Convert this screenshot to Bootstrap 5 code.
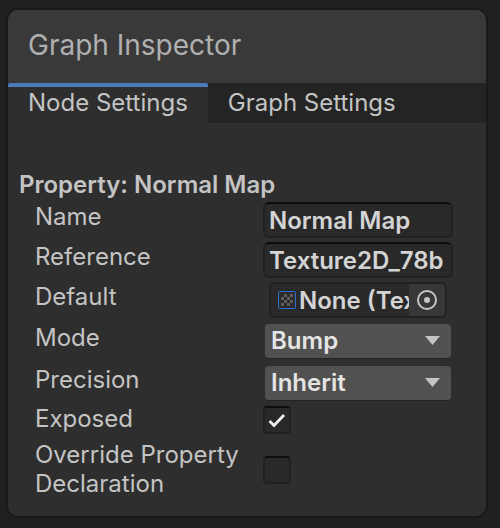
<!DOCTYPE html>
<html lang="en">
<head>
<meta charset="utf-8">
<meta name="viewport" content="width=device-width, initial-scale=1">
<title>Graph Inspector</title>
<link href="https://cdn.jsdelivr.net/npm/bootstrap@5.3.0/dist/css/bootstrap.min.css" rel="stylesheet">
<style>
  body { background: #202020; color: #c4c4c4; font-family: Inter, "Liberation Sans", sans-serif; font-size: 24px; line-height: 29px; }
  .inspector { margin: 8px 12px 10px 6px; background: #2e2e2e; border: 2px solid #191919; border-radius: 12px; overflow: hidden; }
  .inspector-title { background: #393939; color: #b0b0b0; padding: 18px 20px 21px; }
  .inspector-title h1 { font-size: 28px; line-height: 34px; font-weight: 400; }
  .inspector-tabs { background: #242424; }
  .inspector-tabs .nav-link { height: 40px; padding: 1px 20px 6px; border-top: 4px solid transparent; border-radius: 0; color: #c4c4c4; }
  .inspector-tabs .nav-link.active { background: #2e2e2e; border-top-color: #4a7bbd; border-radius: 2px 2px 0 0; }
  .inspector-body { padding: 47px 33px 17px 11px; }
  .inspector-body h2 { font-size: 24px; line-height: 29px; font-weight: 600; padding-bottom: 3px; }
  .prop { padding-left: 16px; min-height: 40px; }
  .prop-label { flex: 0 0 228px; }
  .prop-menu { min-height: 42px; padding-top: 2px; }
  .prop-menu .prop-label { margin-top: -1px; }
  .prop-tick { min-height: 34px; }
  .prop-tick .prop-label { margin-top: -2px; }
  .field { width: 100%; min-width: 0; height: 36px; padding: 0 4px; background: #292929; color: #d4d4d4; border: 2px solid #212121; border-top-color: #0d0d0d; border-radius: 6px; font-weight: 600; outline: 0; }
  .object-field { height: 36px; margin: 0 6px; background: #292929; color: #d4d4d4; border: 2px solid #212121; border-radius: 6px; font-weight: 600; overflow: hidden; }
  .object-field input { color: inherit; font-weight: 600; background: none; border: 0; padding: 0; margin-left: 3px; min-width: 0; outline: 0; }
  .object-field button { width: 36px; background: #373737; border: 0; }
  .object-field .texture { margin-left: 7px; }
  .menu { appearance: none; height: 35px; margin: 0 2px; padding: 0 40px 1px 6px; color: #e4e4e4; font-weight: 600; border: 0; border-bottom: 1px solid #242424; border-radius: 4px; outline: 0;
    background: #515151 url("data:image/svg+xml,%3Csvg xmlns='http://www.w3.org/2000/svg' width='15' height='9'%3E%3Cpath d='M0 0h15L7.5 9z' fill='%23c4c4c4'/%3E%3C/svg%3E") no-repeat right 11px top 12px; }
  .tick { appearance: none; width: 28px; height: 28px; margin: 0; background: #292929 center no-repeat; border: 2px solid #212121; border-top-color: #0d0d0d; border-radius: 4px; }
  .tick:checked { background-image: url("data:image/svg+xml,%3Csvg xmlns='http://www.w3.org/2000/svg' width='24' height='24'%3E%3Cpath d='M4.5 13l4.500 4.500L19 7' fill='none' stroke='%23eee' stroke-width='2.800'/%3E%3C/svg%3E"); }
  .prop-last { padding-bottom: 1px; }
  .prop-last .tick { margin-top: 2px; }
</style>
</head>
<body>
<main class="inspector">
  <header class="inspector-title"><h1 class="m-0">Graph Inspector</h1></header>
  <nav class="inspector-tabs nav flex-nowrap">
    <a class="nav-link active" aria-current="page" href="#node">Node Settings</a>
    <a class="nav-link" href="#graph">Graph Settings</a>
  </nav>
  <form class="inspector-body" id="node">
    <h2 class="m-0">Property: Normal Map</h2>
    <div class="prop d-flex align-items-start">
      <label class="prop-label" for="name">Name</label>
      <input class="field" id="name" type="text" value="Normal Map">
    </div>
    <div class="prop d-flex align-items-start">
      <label class="prop-label" for="reference">Reference</label>
      <input class="field" id="reference" type="text" value="Texture2D_78b">
    </div>
    <div class="prop d-flex align-items-start">
      <label class="prop-label" for="default">Default</label>
      <div class="object-field d-flex flex-grow-1 align-items-center">
        <svg class="texture flex-shrink-0" width="18" height="18" aria-hidden="true">
          <rect x="0.500" y="0.500" width="17" height="17" rx="1" fill="#2b2b2b" stroke="#2a72d4"/>
          <path fill="#5c5c5c" d="M6 3h3v3H6zM12 3h3v3h-3zM3 6h3v3H3zM9 6h3v3H9zM6 9h3v3H6zM12 9h3v3h-3zM3 12h3v3H3zM9 12h3v3H9z"/>
        </svg>
        <input class="w-100" id="default" type="text" value="None (Texture 2D)" readonly>
        <button class="d-flex flex-shrink-0 align-self-stretch align-items-center justify-content-center p-0" type="button" aria-label="Select texture">
          <svg width="22" height="22" aria-hidden="true"><circle cx="11" cy="11" r="9" fill="none" stroke="#c4c4c4" stroke-width="2"/><circle cx="11" cy="11" r="3" fill="#c4c4c4"/></svg>
        </button>
      </div>
    </div>
    <div class="prop prop-menu d-flex align-items-start">
      <label class="prop-label" for="mode">Mode</label>
      <select class="menu flex-grow-1" id="mode"><option>Bump</option></select>
    </div>
    <div class="prop prop-menu d-flex align-items-start">
      <label class="prop-label" for="precision">Precision</label>
      <select class="menu flex-grow-1" id="precision"><option>Inherit</option></select>
    </div>
    <div class="prop prop-tick d-flex align-items-start">
      <label class="prop-label" for="exposed">Exposed</label>
      <input class="tick" id="exposed" type="checkbox" checked>
    </div>
    <div class="prop prop-last d-flex align-items-center">
      <label class="prop-label" for="override">Override Property<br>Declaration</label>
      <input class="tick" id="override" type="checkbox">
    </div>
  </form>
</main>
<script src="https://cdn.jsdelivr.net/npm/bootstrap@5.3.0/dist/js/bootstrap.bundle.min.js"></script>
</body>
</html>
